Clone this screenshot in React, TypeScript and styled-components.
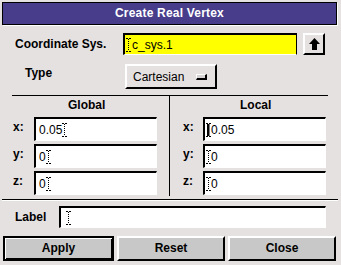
import styled, { createGlobalStyle } from 'styled-components';

const GlobalStyle = createGlobalStyle`
  html, body {
    margin: 0;
    padding: 0;
    background: #e6e1e1;
  }
  * {
    box-sizing: border-box;
  }
`;

const Dialog = styled.div`
  width: 341px;
  height: 265px;
  padding: 2px;
  background: #e6e1e1;
  font-family: 'Liberation Sans', Arial, sans-serif;
  font-size: 12px;
  color: #000;
  display: flex;
  flex-direction: column;
`;

const TitleBar = styled.div`
  height: 23px;
  margin-right: 2px;
  background: #483d8b;
  border: 1px solid #000;
  box-shadow: 1px 1px 0 #fff;
  color: #fff;
  font-weight: bold;
  font-size: 12px;
  letter-spacing: 0.2px;
  line-height: 21px;
  text-align: center;
`;

const Row = styled.div<{ $top: number; $height: number; $align?: string }>`
  display: flex;
  align-items: ${(p) => p.$align || 'center'};
  margin-top: ${(p) => p.$top}px;
  height: ${(p) => p.$height}px;
`;

const Label = styled.div<{ $indent: number; $width: number }>`
  width: ${(p) => p.$width}px;
  padding-left: ${(p) => p.$indent}px;
  font-weight: bold;
  line-height: 14px;
  white-space: nowrap;
`;

const TextField = styled.div<{ $width: number; $height: number; $bg?: string }>`
  width: ${(p) => p.$width}px;
  height: ${(p) => p.$height}px;
  background: ${(p) => p.$bg || '#fff'};
  border-style: solid;
  border-width: 2px 1px 1px 2px;
  border-color: #000 ${(p) => (p.$bg ? '#000' : '#fff')} #fff #000;
  display: flex;
  align-items: center;
  padding-left: 1px;
  white-space: nowrap;
  line-height: 14px;
`;

const RaisedButton = styled.div<{ $width: number; $height: number }>`
  width: ${(p) => p.$width}px;
  height: ${(p) => p.$height}px;
  border-style: solid;
  border-width: 2px;
  border-color: #fff #000 #000 #fff;
  background: #e6e1e1;
  display: flex;
  align-items: center;
  justify-content: center;
`;

const OptionMenu = styled(RaisedButton)`
  justify-content: space-between;
  padding: 0 8px 0 6px;
`;

const Indicator = styled.span`
  display: block;
  width: 11px;
  height: 6px;
  border-style: solid;
  border-width: 1px 2px 2px 1px;
  border-color: #fff #000 #000 #fff;
  background: #d8d3d3;
`;

const Section = styled.div`
  display: flex;
  margin: 6px 0 0 10px;
  width: 316px;
  height: 101px;
  border-top: 1px solid #000;
`;

const Panel = styled.div<{ $width: number; $indent: number; $divider?: boolean }>`
  width: ${(p) => p.$width}px;
  padding-left: ${(p) => p.$indent}px;
  border-right: ${(p) => (p.$divider ? '1px solid #000' : 'none')};
  display: flex;
  flex-direction: column;
`;

const Heading = styled.div<{ $center: number }>`
  height: 18px;
  margin-bottom: 3px;
  line-height: 18px;
  font-weight: bold;
  padding-left: ${(p) => p.$center}px;
`;

const CoordRow = styled.div`
  display: flex;
  align-items: flex-start;
  height: 24px;
  margin-bottom: 3px;
`;

const AxisLabel = styled.div<{ $width: number }>`
  width: ${(p) => p.$width}px;
  padding-top: 3px;
  font-weight: bold;
  line-height: 14px;
`;

const Separator = styled.div`
  margin-top: 3px;
  height: 2px;
  border-top: 1px solid #000;
  border-bottom: 1px solid #fff;
  margin-right: 1px;
`;

const ButtonBar = styled.div`
  display: flex;
  gap: 3px;
  margin-top: 8px;
  padding-left: 1px;
`;

const ActionButton = styled.div<{ $width: number; $default?: boolean }>`
  width: ${(p) => p.$width}px;
  height: 25px;
  background: #c8c8c8;
  border-style: solid;
  border-width: 2px;
  border-color: ${(p) => (p.$default ? '#000' : '#fff #000 #000 #fff')};
  box-shadow: ${(p) =>
    p.$default ? 'inset 1px 1px 0 #fff, inset -1px -1px 0 #000' : 'none'};
  font-weight: bold;
  line-height: 21px;
  text-align: center;
`;

const CaretMark = styled.svg`
  flex: none;
  display: block;
`;

const Caret = ({ solid }: { solid?: boolean }) => (
  <CaretMark width="5" height="14" viewBox="0 0 5 14">
    <path d="M0 0.5h2M3 0.5h2M0 13.5h2M3 13.5h2" stroke="#000" strokeWidth="1" />
    {solid ? (
      <rect x="1" y="1" width="2.5" height="12" fill="#000" />
    ) : (
      <path d="M2.5 1v12" stroke="#000" strokeWidth="1" strokeDasharray="1 1" />
    )}
  </CaretMark>
);

const ArrowUp = () => (
  <svg width="11" height="12" viewBox="0 0 11 12">
    <polygon points="5.5,0 11,6 8,6 8,12 3,12 3,6 0,6" fill="#000" />
  </svg>
);

type Coord = { axis: string; value: string; caret: 'before' | 'after' | 'solid' };

const globalCoords: Coord[] = [
  { axis: 'x:', value: '0.05', caret: 'after' },
  { axis: 'y:', value: '0', caret: 'after' },
  { axis: 'z:', value: '0', caret: 'after' },
];

const localCoords: Coord[] = [
  { axis: 'x:', value: '0.05', caret: 'solid' },
  { axis: 'y:', value: '0', caret: 'before' },
  { axis: 'z:', value: '0', caret: 'before' },
];

const CoordField = ({ c }: { c: Coord }) => (
  <TextField $width={123} $height={24}>
    {c.caret === 'after' ? (
      <>
        <span style={{ paddingLeft: 2 }}>{c.value}</span>
        <Caret />
      </>
    ) : (
      <>
        <Caret solid={c.caret === 'solid'} />
        <span>{c.value}</span>
      </>
    )}
  </TextField>
);

const App = () => {
  return (
    <>
      <GlobalStyle />
      <Dialog>
        <TitleBar>Create Real Vertex</TitleBar>

        <Row $top={8} $height={22}>
          <Label $indent={13} $width={121}>Coordinate Sys.</Label>
          <TextField $width={174} $height={22} $bg="#ffff00">
            <Caret />
            <span style={{ paddingLeft: 1 }}>c_sys.1</span>
          </TextField>
          <RaisedButton $width={22} $height={22} style={{ marginLeft: 6 }}>
            <ArrowUp />
          </RaisedButton>
        </Row>

        <Row $top={9} $height={25} $align="flex-start">
          <Label $indent={23} $width={123} style={{ paddingTop: 2 }}>Type</Label>
          <OptionMenu $width={92} $height={25}>
            <span>Cartesian</span>
            <Indicator />
          </OptionMenu>
        </Row>

        <Section>
          <Panel $width={158} $indent={1} $divider>
            <Heading $center={55}>Global</Heading>
            {globalCoords.map((c) => (
              <CoordRow key={c.axis}>
                <AxisLabel $width={21}>{c.axis}</AxisLabel>
                <CoordField c={c} />
              </CoordRow>
            ))}
          </Panel>
          <Panel $width={158} $indent={13}>
            <Heading $center={57}>Local</Heading>
            {localCoords.map((c) => (
              <CoordRow key={c.axis}>
                <AxisLabel $width={20}>{c.axis}</AxisLabel>
                <CoordField c={c} />
              </CoordRow>
            ))}
          </Panel>
        </Section>

        <Separator />

        <Row $top={5} $height={22}>
          <Label $indent={13} $width={57}>Label</Label>
          <TextField $width={267} $height={22}>
            <span style={{ width: 4 }} />
            <Caret />
          </TextField>
        </Row>

        <ButtonBar>
          <ActionButton $width={111} $default>Apply</ActionButton>
          <ActionButton $width={108}>Reset</ActionButton>
          <ActionButton $width={108}>Close</ActionButton>
        </ButtonBar>
      </Dialog>
    </>
  );
};

export default App;
